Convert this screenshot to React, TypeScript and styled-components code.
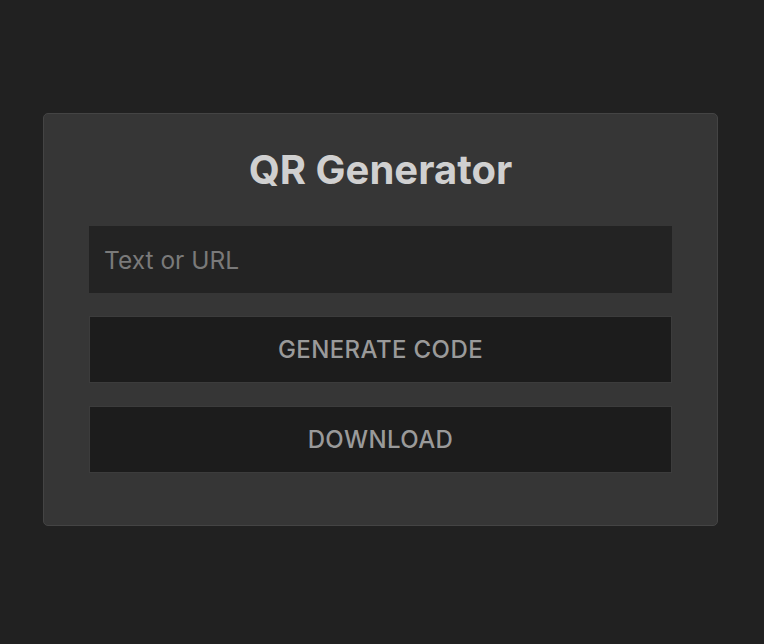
import styled, { createGlobalStyle } from 'styled-components';

const GlobalStyle = createGlobalStyle`
  html, body {
    margin: 0;
    padding: 0;
    background: #212121;
  }
  body {
    font-family: Inter, "Noto Sans", sans-serif;
  }
`;

const Page = styled.main`
  min-height: 100vh;
  box-sizing: border-box;
  display: flex;
  align-items: flex-start;
  justify-content: center;
  padding: 113px 46px 0 43px;
`;

const Card = styled.section`
  width: 675px;
  box-sizing: border-box;
  background: #363636;
  border: 1px solid #444;
  border-radius: 5px;
  padding: 0 45px 52px;
  display: flex;
  flex-direction: column;
  gap: 23px;
`;

const Title = styled.h1`
  margin: 0;
  height: 89px;
  padding-top: 26px;
  box-sizing: border-box;
  text-align: center;
  font-size: 40px;
  font-weight: 700;
  color: #d0d0d0;
  line-height: 1.5;
`;

const TextInput = styled.input`
  height: 67px;
  box-sizing: border-box;
  border: none;
  outline: none;
  background: #232323;
  padding: 0 15px;
  font-family: inherit;
  font-size: 24.5px;
  color: #ccc;

  &::placeholder {
    color: #7a7a7a;
  }
`;

const Button = styled.button`
  height: 67px;
  box-sizing: border-box;
  border: 1px solid #3c3c3c;
  background: #1c1c1c;
  font-family: inherit;
  font-size: 24px;
  font-weight: 500;
  letter-spacing: 0.4px;
  color: #9a9a9a;
  text-transform: uppercase;
  cursor: pointer;
`;

export default function App() {
  return (
    <>
      <GlobalStyle />
      <Page>
        <Card>
          <Title>QR Generator</Title>
          <TextInput type="text" placeholder="Text or URL" />
          <Button>Generate Code</Button>
          <Button>Download</Button>
        </Card>
      </Page>
    </>
  );
}
